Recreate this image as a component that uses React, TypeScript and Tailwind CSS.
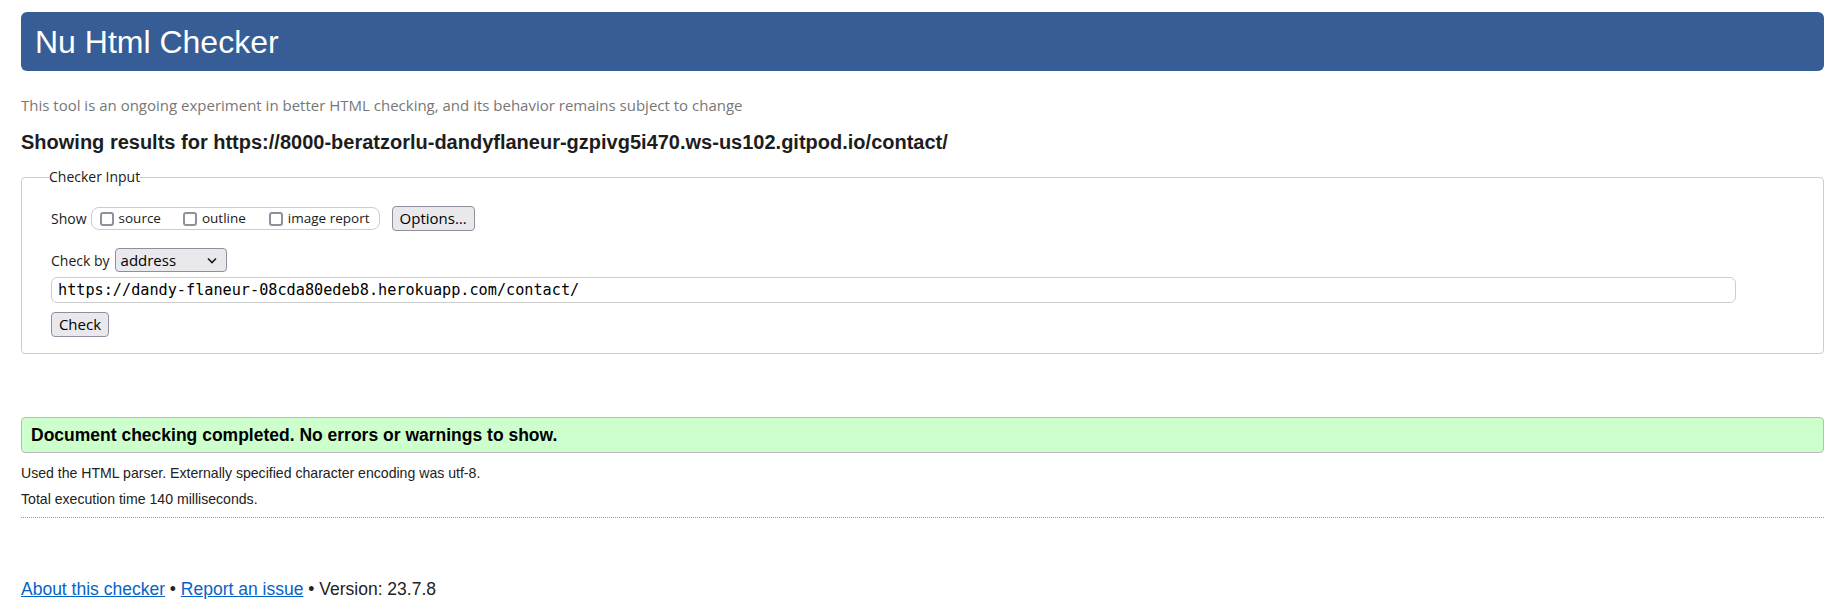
import React from 'react'

const ui = { fontFamily: '"Open Sans", "Noto Sans", sans-serif' }
const arial = { fontFamily: '"Liberation Sans", Arial, sans-serif' }
const mono = { fontFamily: '"DejaVu Sans Mono", "Liberation Mono", monospace' }

function Box({ label }: { label: string }) {
  return (
    <span className="flex items-center gap-[5px]">
      <span className="w-[14px] h-[14px] border-2 border-[#8f8f9d] rounded-[3px] bg-white" />
      <span className="text-[13.5px] text-[#1a1a1a]">{label}</span>
    </span>
  )
}

export default function App() {
  return (
    <div className="min-h-[615px] bg-white pl-[21px] pr-[23px] pt-[12px] text-[#1a1a1a]" style={arial}>
      {/* Header */}
      <div className="h-[59px] bg-[#365d95] rounded-[6px] flex items-center pl-[14px]">
        <h1 className="text-[32px] leading-none text-white">Nu Html Checker</h1>
      </div>

      <p className="mt-[24px] text-[15px] leading-[20px] text-[#777]" style={ui}>
        This tool is an ongoing experiment in better HTML checking, and its behavior remains subject to change
      </p>

      <h2 className="mt-[15px] text-[20px] leading-[24px] font-bold text-[#1d1d1d]">
        Showing results for https://8000-beratzorlu-dandyflaneur-gzpivg5i470.ws-us102.gitpod.io/contact/
      </h2>

      {/* Checker input */}
      <fieldset className="mt-[13px] border border-[#ccc] rounded-[4px] pl-[29px] pb-[16px]" style={ui}>
        <legend className="ml-[-2px] text-[14px] leading-[20px] text-[#1a1a1a]">Checker Input</legend>

        <div className="mt-[18px] flex items-center h-[27px]">
          <span className="text-[14px]">Show</span>
          <div className="ml-[4px] h-[23px] w-[289px] border border-[#ccc] rounded-[8px] flex items-center pl-[8px]">
            <Box label="source" />
            <span className="w-[22px]" />
            <Box label="outline" />
            <span className="w-[23px]" />
            <Box label="image report" />
          </div>
          <button className="ml-[12px] h-[25px] w-[83px] bg-[#e9e9ed] border border-[#8f8f9d] rounded-[4px] text-[15px] leading-none text-black">
            Options…
          </button>
        </div>

        <div className="mt-[16px] flex items-center">
          <span className="text-[14px]">Check by</span>
          <div className="ml-[5px] h-[24px] w-[112px] bg-[#e9e9ed] border border-[#8f8f9d] rounded-[4px] flex items-center justify-between pl-[5px] pr-[9px]">
            <span className="text-[15px] leading-none text-black">address</span>
            <svg width="10" height="7" viewBox="0 0 10 7" fill="none">
              <path d="M1 1.5 L5 5.5 L9 1.5" stroke="#1a1a1a" strokeWidth="1.6" />
            </svg>
          </div>
        </div>

        <div
          className="mt-[5px] h-[26px] w-[1685px] border border-[#ccc] rounded-[6px] flex items-center pl-[6px] text-[15.2px] text-black"
          style={mono}
        >
          https://dandy-flaneur-08cda80edeb8.herokuapp.com/contact/
        </div>

        <button className="mt-[9px] h-[25px] w-[58px] bg-[#e9e9ed] border border-[#8f8f9d] rounded-[4px] text-[15px] leading-none text-black">
          Check
        </button>
      </fieldset>

      {/* Result */}
      <div className="mt-[63px] h-[36px] bg-[#ccffcc] border border-[#bbb] rounded-[4px] flex items-center pl-[9px]">
        <span className="text-[17.5px] font-bold text-black">Document checking completed. No errors or warnings to show.</span>
      </div>

      <p className="mt-[10px] text-[14.1px] leading-[20px] text-[#222]">
        Used the HTML parser. Externally specified character encoding was utf-8.
      </p>
      <p className="mt-[6px] text-[14.1px] leading-[20px] text-[#222]">Total execution time 140 milliseconds.</p>

      <hr className="mt-[8px] border-0 border-t border-dotted border-[#999]" />

      <p className="mt-[61px] text-[17.5px] leading-[20px] text-[#222]">
        <a className="text-[#0563c8] underline">About this checker</a> •{' '}
        <a className="text-[#0563c8] underline">Report an issue</a> • Version: 23.7.8
      </p>
    </div>
  )
}
